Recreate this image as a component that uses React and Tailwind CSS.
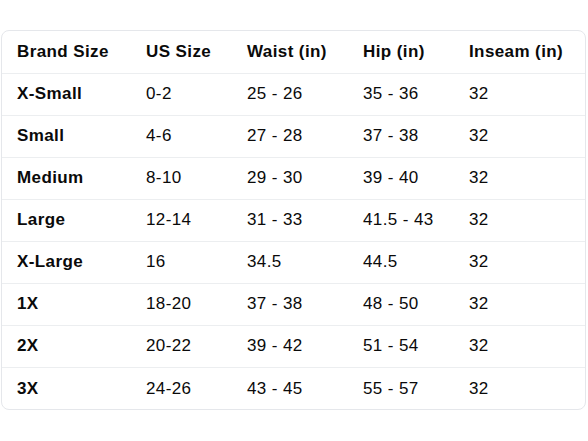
const HEAD = ['Brand Size', 'US Size', 'Waist (in)', 'Hip (in)', 'Inseam (in)'];

const ROWS = [
  ['X-Small', '0-2', '25 - 26', '35 - 36', '32'],
  ['Small', '4-6', '27 - 28', '37 - 38', '32'],
  ['Medium', '8-10', '29 - 30', '39 - 40', '32'],
  ['Large', '12-14', '31 - 33', '41.5 - 43', '32'],
  ['X-Large', '16', '34.5', '44.5', '32'],
  ['1X', '18-20', '37 - 38', '48 - 50', '32'],
  ['2X', '20-22', '39 - 42', '51 - 54', '32'],
  ['3X', '24-26', '43 - 45', '55 - 57', '32'],
];

const COLS = ['w-[129px]', 'w-[101px]', 'w-[116px]', 'w-[106px]', 'w-auto'];

export default function App() {
  return (
    <div className="w-[588px] h-[441px] bg-white pt-[30px] pl-[1px] font-['Liberation_Sans',Arial,sans-serif] text-[17px] tracking-[0.4px] text-[#0a0a0a]">
      <div className="w-[585px] rounded-lg border border-[#e5e7eb] overflow-hidden">
        <table className="w-full border-collapse table-fixed">
          <thead>
            <tr className="h-[42px] border-b border-[#eceef0]">
              {HEAD.map((h, i) => (
                <th key={h} className={`${COLS[i]} text-left font-bold pl-[15px] pr-0 py-0 whitespace-nowrap`}>{h}</th>
              ))}
            </tr>
          </thead>
          <tbody>
            {ROWS.map((r, ri) => (
              <tr key={r[0]} className={`h-[42px] ${ri < ROWS.length - 1 ? 'border-b border-[#eceef0]' : ''}`}>
                {r.map((c, i) => (
                  <td key={i} className={`pl-[15px] py-0 whitespace-nowrap ${i === 0 ? 'font-bold' : ''}`}>{c}</td>
                ))}
              </tr>
            ))}
          </tbody>
        </table>
      </div>
    </div>
  );
}
